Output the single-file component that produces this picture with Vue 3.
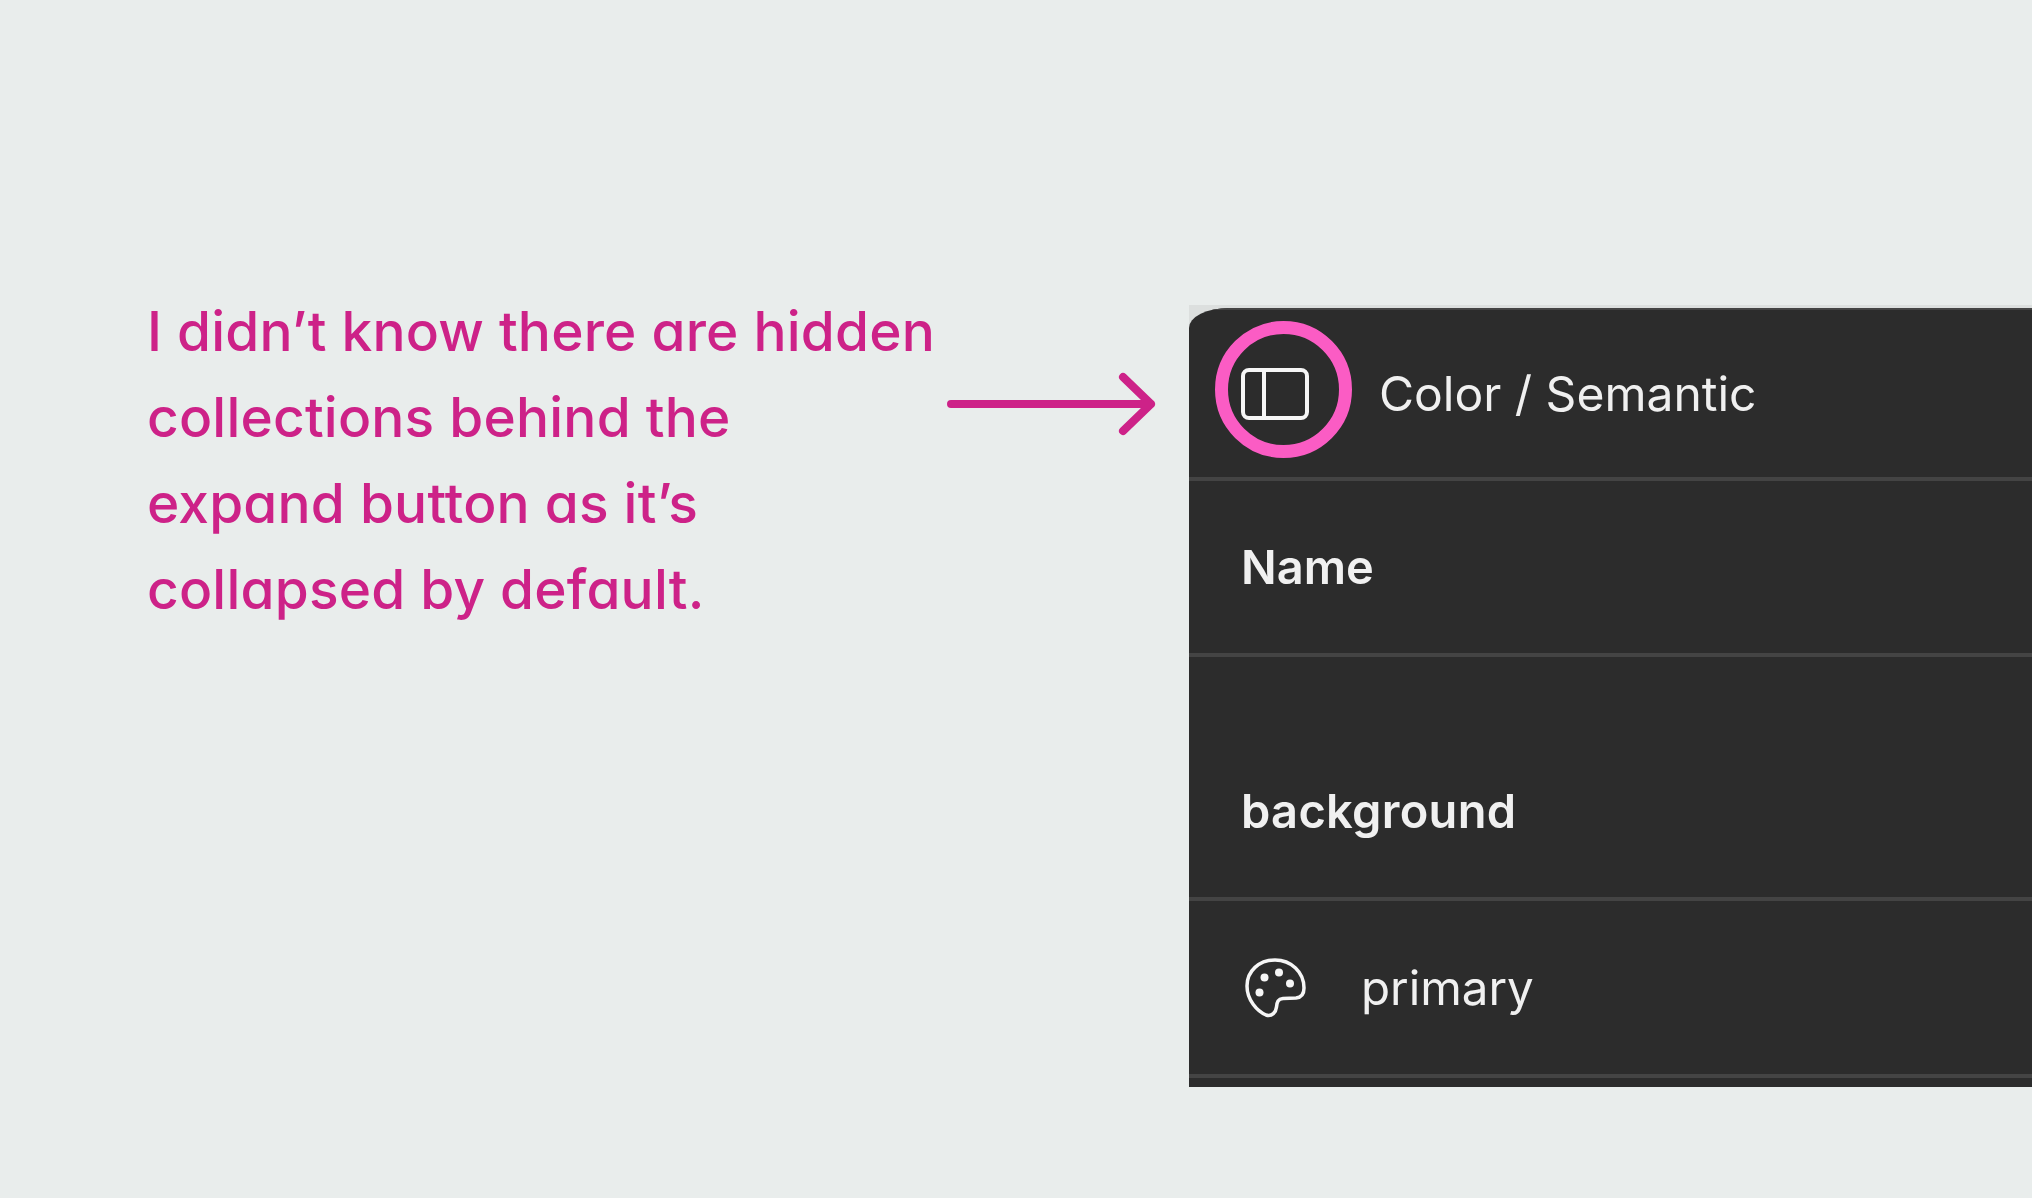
<script setup>
const lines = [
  'I didn’t know there are hidden',
  'collections behind the',
  'expand button as it’s',
  'collapsed by default.',
]
</script>

<template>
  <main class="page">
    <section class="note">
      <p v-for="line in lines" :key="line" class="note-line">{{ line }}</p>
    </section>
    <svg class="arrow" width="212" height="70" viewBox="0 0 212 70" fill="none">
      <path d="M4 35H204M176 8L204 35L176 62" stroke="#cd2288" stroke-width="8" stroke-linecap="round" stroke-linejoin="round" />
    </svg>
    <section class="panel">
      <div class="panel-body">
        <header class="panel-head">
          <svg class="soft toggle-icon" width="70" height="54" viewBox="0 0 70 54" fill="none">
            <rect x="3" y="3" width="64" height="48" rx="6" stroke="#f6f6f6" stroke-width="4" />
            <path d="M24 3V51" stroke="#f6f6f6" stroke-width="4" />
          </svg>
          <span class="ring"></span>
          <span class="soft title">Color / Semantic</span>
        </header>
        <div class="row name-row"><strong class="soft">Name</strong></div>
        <div class="row group-row"><strong class="soft wide">background</strong></div>
        <div class="row token-row">
          <svg class="soft palette" width="80" height="75" viewBox="0 0 80 75" fill="none" stroke="#f6f6f6" stroke-width="3.5" stroke-linejoin="round">
            <path d="M40 10C24 10 12 21 12 36C12 50 22 61 31 65C37 67 41 62 41.5 57C42 52 43 49 48 48.5L61 48C66 47.5 69 44 69 38C69 22 56 10 40 10Z" />
            <circle cx="29.5" cy="27.5" r="4" fill="#f6f6f6" stroke="none" />
            <circle cx="44" cy="22.5" r="4" fill="#f6f6f6" stroke="none" />
            <circle cx="55" cy="33.5" r="4" fill="#f6f6f6" stroke="none" />
            <circle cx="24.5" cy="42.5" r="4" fill="#f6f6f6" stroke="none" />
          </svg>
          <span class="soft token">primary</span>
        </div>
        <div class="tail"></div>
      </div>
    </section>
  </main>
</template>

<style>
html, body { margin: 0; }
</style>

<style scoped>
.page {
  width: 2032px;
  height: 1198px;
  overflow: hidden;
  background: #e9edec;
  display: flex;
  align-items: flex-start;
  font-family: Inter, "Liberation Sans", sans-serif;
}
.note {
  width: 791px;
  margin: 288px 0 0 147px;
}
.note-line {
  margin: 0;
  height: 86px;
  line-height: 86px;
  font-size: 55px;
  font-weight: 550;
  font-feature-settings: "cv11";
  letter-spacing: 0.2px;
  color: #cd2288;
  white-space: nowrap;
}
.arrow {
  margin: 369px 0 0 9px;
  flex: none;
}
.panel {
  flex: none;
  width: 843px;
  height: 782px;
  margin: 305px 0 0 30px;
  padding-top: 3px;
  box-sizing: border-box;
  background: #dcdfde;
  color: #f0f0f0;
}
.panel-body {
  height: 100%;
  background: #2c2c2c;
  border-top-left-radius: 40px 20px;
  display: flex;
  flex-direction: column;
  overflow: hidden;
}
.soft { filter: blur(0.5px); }
.panel-head {
  height: 169px;
  flex: none;
  border-top: 2px solid #444;
  box-sizing: border-box;
  display: flex;
  align-items: center;
  position: relative;
  font-size: 48px;
}
.toggle-icon { margin-left: 51px; flex: none; }
.ring {
  position: absolute;
  left: 26px;
  top: 11px;
  width: 137px;
  height: 137px;
  border: 13px solid #fb5cc4;
  border-radius: 50%;
  box-sizing: border-box;
}
.title { margin-left: 69px; }
.row {
  display: flex;
  align-items: center;
  flex: none;
  border-top: 4px solid #444;
  box-sizing: border-box;
  padding-left: 52px;
  font-size: 47.5px;
}
.row strong { font-weight: 600; font-size: 47px; }
.row strong.wide { letter-spacing: 0.3px; }
.name-row { height: 176px; padding-bottom: 2px; }
.group-row { height: 244px; align-items: flex-end; padding-bottom: 58px; }
.token-row { height: 177px; }
.palette { margin-left: -6px; flex: none; }
.token { margin-left: 46px; }
.tail { border-top: 4px solid #444; flex: 1; }
</style>
